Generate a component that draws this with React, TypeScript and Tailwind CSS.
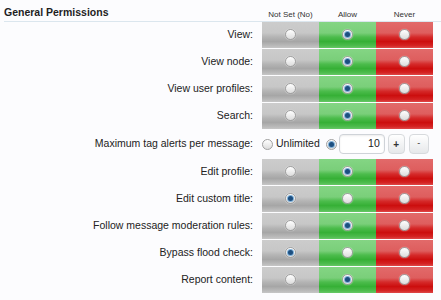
import React from 'react';

type Choice = 'notset' | 'allow' | 'never';

const rowsTop: { label: string; value: Choice }[] = [
  { label: 'View:', value: 'allow' },
  { label: 'View node:', value: 'allow' },
  { label: 'View user profiles:', value: 'allow' },
  { label: 'Search:', value: 'allow' },
];

const rowsBottom: { label: string; value: Choice }[] = [
  { label: 'Edit profile:', value: 'allow' },
  { label: 'Edit custom title:', value: 'notset' },
  { label: 'Follow message moderation rules:', value: 'allow' },
  { label: 'Bypass flood check:', value: 'notset' },
  { label: 'Report content:', value: 'allow' },
];

function Radio({ checked }: { checked?: boolean }) {
  return (
    <span className="flex h-[11px] w-[11px] items-center justify-center rounded-full border border-[#a0a0a0] bg-[linear-gradient(to_bottom,#ffffff,#dcdcdc)] shadow-[0_0_1px_rgba(255,255,255,0.9)]">
      {checked && <span className="h-[5px] w-[5px] rounded-full bg-[#1d4f80] shadow-[0_0_0_1px_#7fb0d8]" />}
    </span>
  );
}

function Cell({ color, checked }: { color: Choice; checked: boolean }) {
  const bg =
    color === 'notset'
      ? 'bg-[linear-gradient(to_bottom,#cccccc_0%,#c7c7c7_42%,#b4b4b4_58%,#a6a6a6_75%,#b8b8b8_90%,#c6c6c6_100%)]'
      : color === 'allow'
        ? 'bg-[linear-gradient(to_bottom,#84d584_0%,#7acf7a_42%,#4cbc4c_58%,#36b036_75%,#4cbb4c_90%,#66c866_100%)]'
        : 'bg-[linear-gradient(to_bottom,#e26a6a_0%,#de5e5e_42%,#d52a2a_58%,#cc0e0e_75%,#d42222_90%,#de4848_100%)]';
  return (
    <div className={`flex w-[57px] items-center justify-center pb-[2px] ${bg}`}>
      <Radio checked={checked} />
    </div>
  );
}

function PermRow({ label, value }: { label: string; value: Choice }) {
  return (
    <div className="mb-[1px] flex h-[26px]">
      <div className="flex w-[262px] items-center justify-end pr-[9px] text-[10.5px] text-[#222]">{label}</div>
      <Cell color="notset" checked={value === 'notset'} />
      <Cell color="allow" checked={value === 'allow'} />
      <Cell color="never" checked={value === 'never'} />
    </div>
  );
}

export default function App() {
  return (
    <div className="h-[300px] w-[441px] overflow-hidden bg-[#fcfcfe] font-['Liberation_Sans',Arial,sans-serif]">
      <div className="ml-[4px] flex h-[22px] border-b border-[#dbe6ee]">
        <h2 className="w-[258px] pt-[5px] text-[10.5px] font-bold text-[#1e1e1e]">General Permissions</h2>
        <div className="flex w-[57px] justify-center pt-[9px] text-[8px] text-[#333]">Not Set (No)</div>
        <div className="flex w-[57px] justify-center pt-[9px] text-[8px] text-[#333]">Allow</div>
        <div className="flex w-[57px] justify-center pt-[9px] text-[8px] text-[#333]">Never</div>
      </div>

      {rowsTop.map((r) => (
        <PermRow key={r.label} {...r} />
      ))}

      <div className="mb-[1px] flex h-[28px]">
        <div className="flex w-[262px] items-center justify-end pr-[9px] text-[10.5px] text-[#222]">
          Maximum tag alerts per message:
        </div>
        <div className="flex items-center">
          <label className="flex items-center gap-[3px] text-[10.5px] text-[#222]">
            <Radio />
            Unlimited
          </label>
          <span className="ml-[6px]">
            <Radio checked />
          </span>
          <div className="ml-[2px] flex h-[20px] w-[46px] items-center justify-end rounded-[4px] border border-[#cfd3d8] bg-white pr-[4px] text-[10.5px] text-[#222] shadow-[inset_0_1px_2px_rgba(0,0,0,0.08)]">
            10
          </div>
          <button className="ml-[3px] flex h-[20px] w-[17px] items-center justify-center rounded-[4px] border border-[#d7dadd] bg-[linear-gradient(to_bottom,#ffffff,#e6e8ea)] text-[10px] font-bold text-[#333]">
            +
          </button>
          <button className="ml-[4px] flex h-[20px] w-[20px] items-center justify-center rounded-[4px] border border-[#d7dadd] bg-[linear-gradient(to_bottom,#ffffff,#e6e8ea)] text-[9px] text-[#333]">
            -
          </button>
        </div>
      </div>

      {rowsBottom.map((r) => (
        <PermRow key={r.label} {...r} />
      ))}
    </div>
  );
}
